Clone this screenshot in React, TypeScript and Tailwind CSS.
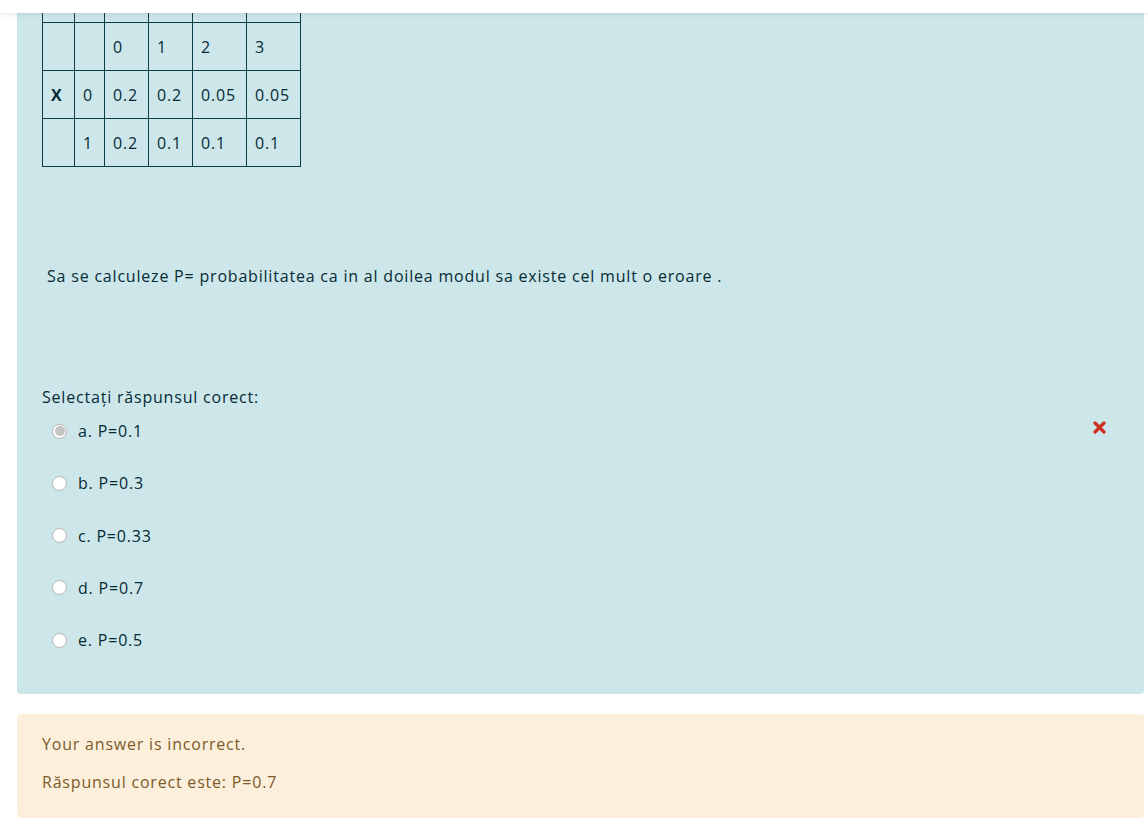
import React from "react";

const font = { fontFamily: '"Open Sans", "Noto Sans", Arial, sans-serif' };

const rows = [
  ["", "", "", "", "", ""],
  ["", "", "0", "1", "2", "3"],
  ["X", "0", "0.2", "0.2", "0.05", "0.05"],
  ["", "1", "0.2", "0.1", "0.1", "0.1"],
];

const colWidths = ["w-[32px]", "w-[30px]", "w-[44px]", "w-[44px]", "w-[54px]", "w-[54px]"];

const options = [
  { letter: "a.", text: "P=0.1", checked: true },
  { letter: "b.", text: "P=0.3" },
  { letter: "c.", text: "P=0.33" },
  { letter: "d.", text: "P=0.7" },
  { letter: "e.", text: "P=0.5" },
];

function Radio({ checked }: { checked?: boolean }) {
  return (
    <span className="w-[15px] h-[15px] rounded-full border border-[#b3b3b3] bg-white flex items-center justify-center shrink-0">
      {checked && <span className="w-[10px] h-[10px] rounded-full bg-[#c4c4c4]" />}
    </span>
  );
}

function WrongIcon() {
  return (
    <svg width="13" height="13" viewBox="0 0 13 13">
      <path d="M2 2 L11 11 M11 2 L2 11" stroke="#ca3120" strokeWidth="3.2" strokeLinecap="round" />
    </svg>
  );
}

export default function App() {
  return (
    <div className="relative w-[1148px] h-[838px] overflow-hidden bg-white text-[16px] leading-[22px] tracking-[0.8px]" style={font}>
      <div className="absolute top-0 left-0 right-0 h-[13px] bg-white shadow-[0_2px_4px_rgba(0,0,0,0.08)] z-10" />

      <div className="ml-[17px] w-[1127px] mt-[-51px]">
        <div className="bg-[#cce6ea] text-[#062b35] rounded-[4px] pt-[25px] pl-[25px] pr-[25px] pb-[43px]">
          <table className="border-collapse">
            <tbody>
              {rows.map((r, i) => (
                <tr key={i} className="h-[48px]">
                  {r.map((c, j) => (
                    <td
                      key={j}
                      className={`border border-[#0b3d48] px-[8px] p-0 text-left align-middle ${colWidths[j]} ${c === "X" ? "font-bold text-center" : ""}`}
                    >
                      {c}
                    </td>
                  ))}
                </tr>
              ))}
            </tbody>
          </table>

          <p className="mt-[98px] pl-[5px]">
            Sa se calculeze P= probabilitatea ca in al doilea modul sa existe cel mult o eroare .
          </p>

          <div className="mt-[99px]">Selectați răspunsul corect:</div>

          <div className="mt-[12px] flex flex-col gap-[30.3px]">
            {options.map((o) => (
              <div key={o.letter} className="flex items-center justify-between">
                <div className="flex items-center pl-[10px]">
                  <Radio checked={o.checked} />
                  <span className="ml-[11px]">
                    {o.letter} {o.text}
                  </span>
                </div>
                {o.checked && (
                  <span className="mr-[13px] -mt-[8px] flex items-center">
                    <WrongIcon />
                  </span>
                )}
              </div>
            ))}
          </div>
        </div>

        <div className="mt-[20px] bg-[#fcefdc] text-[#7d5a29] rounded-[4px] pt-[19px] pb-[25px] px-[25px]">
          <div>Your answer is incorrect.</div>
          <div className="mt-[16px]">Răspunsul corect este: P=0.7</div>
        </div>
      </div>
    </div>
  );
}
